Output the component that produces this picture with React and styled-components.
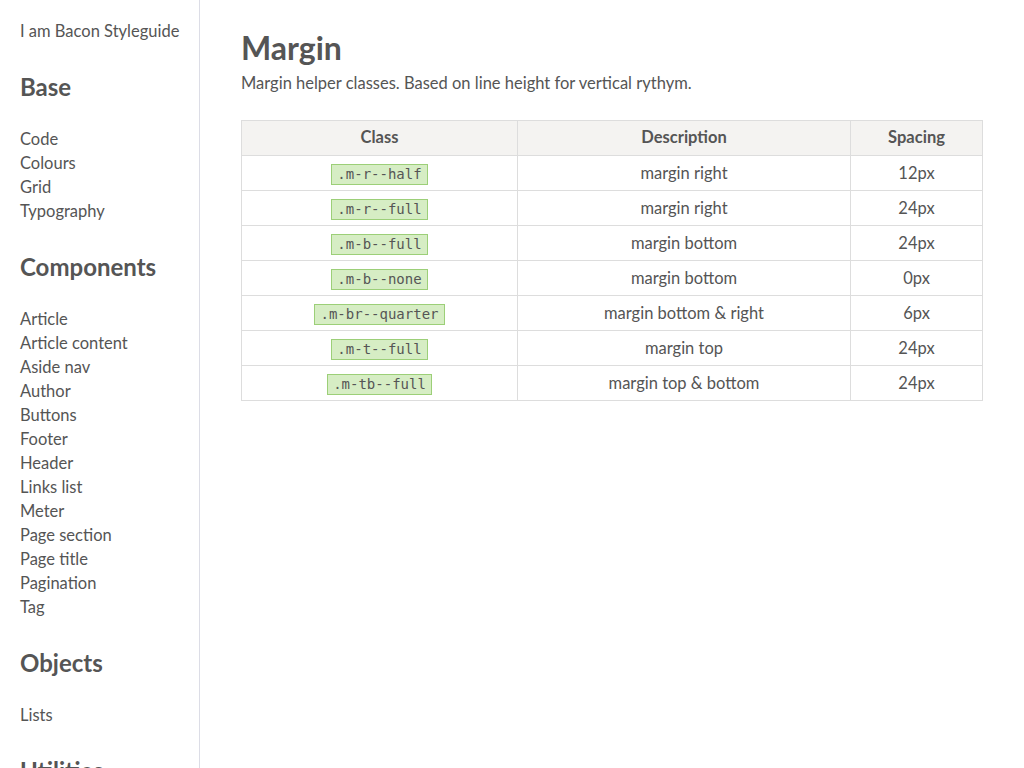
import React from 'react';
import styled, { createGlobalStyle } from 'styled-components';

const GlobalStyle = createGlobalStyle`
  html, body {
    margin: 0;
    padding: 0;
    background: #fff;
    color: #555;
    font-family: "Trebuchet MS", Lato, "DejaVu Sans", sans-serif;
    font-size: 16.5px;
    line-height: 24px;
  }
  * { box-sizing: border-box; }
`;

const nav = [
  { title: 'Base', items: ['Code', 'Colours', 'Grid', 'Typography'] },
  {
    title: 'Components',
    items: [
      'Article', 'Article content', 'Aside nav', 'Author', 'Buttons', 'Footer',
      'Header', 'Links list', 'Meter', 'Page section', 'Page title', 'Pagination', 'Tag',
    ],
  },
  { title: 'Objects', items: ['Lists'] },
  { title: 'Utilities', items: ['Margin', 'Padding'] },
];

const rows = [
  ['.m-r--half', 'margin right', '12px'],
  ['.m-r--full', 'margin right', '24px'],
  ['.m-b--full', 'margin bottom', '24px'],
  ['.m-b--none', 'margin bottom', '0px'],
  ['.m-br--quarter', 'margin bottom & right', '6px'],
  ['.m-t--full', 'margin top', '24px'],
  ['.m-tb--full', 'margin top & bottom', '24px'],
];

const App = () => {
  return (
    <>
      <GlobalStyle />
      <Layout>
        <Sidebar>
          <Brand>I am Bacon Styleguide</Brand>
          {nav.map((section) => (
            <NavSection key={section.title}>
              <NavTitle>{section.title}</NavTitle>
              <NavList>
                {section.items.map((item) => (
                  <li key={item}>{item}</li>
                ))}
              </NavList>
            </NavSection>
          ))}
        </Sidebar>
        <Main>
          <PageTitle>Margin</PageTitle>
          <Intro>Margin helper classes. Based on line height for vertical rythym.</Intro>
          <Table>
            <colgroup>
              <col style={{ width: 276 }} />
              <col style={{ width: 333 }} />
              <col />
            </colgroup>
            <thead>
              <tr>
                <Th>Class</Th>
                <Th>Description</Th>
                <Th>Spacing</Th>
              </tr>
            </thead>
            <tbody>
              {rows.map(([cls, desc, spacing]) => (
                <tr key={cls}>
                  <Td><Code>{cls}</Code></Td>
                  <Td>{desc}</Td>
                  <Td>{spacing}</Td>
                </tr>
              ))}
            </tbody>
          </Table>
        </Main>
      </Layout>
    </>
  );
};

export default App;

const Layout = styled.div`
  display: flex;
  height: 768px;
  overflow: hidden;
`;

const Sidebar = styled.aside`
  width: 200px;
  flex-shrink: 0;
  border-right: 1px solid #dcdde6;
  padding: 19px 20px 0 20px;
`;

const Brand = styled.div`
  line-height: 24px;
  white-space: nowrap;
`;

const NavSection = styled.section`
  margin-top: 26px;
`;

const NavTitle = styled.h2`
  margin: 0;
  font-size: 24px;
  line-height: 36px;
  font-weight: bold;
  color: #555;
`;

const NavList = styled.ul`
  list-style: none;
  margin: 22px 0 0;
  padding: 0;

  li {
    line-height: 24px;
  }
`;

const Main = styled.main`
  flex: 1;
  padding: 28px 41px 0 41px;
`;

const PageTitle = styled.h1`
  margin: 0;
  font-size: 32px;
  line-height: 40px;
  font-weight: bold;
  color: #555;
`;

const Intro = styled.p`
  margin: 3px 0 25px;
  line-height: 24px;
`;

const Table = styled.table`
  width: 100%;
  border-collapse: collapse;
  table-layout: fixed;
  border: 1px solid #ddd;
`;

const Th = styled.th`
  background: #f4f3f1;
  border: 1px solid #ddd;
  height: 35px;
  padding: 0 8px;
  font-weight: bold;
  text-align: center;
  color: #555;
  vertical-align: middle;
  padding-bottom: 2px;
`;

const Td = styled.td`
  border: 1px solid #ddd;
  height: 35px;
  padding: 0 8px 1px;
  text-align: center;
  color: #555;
  vertical-align: middle;
`;

const Code = styled.code`
  display: inline-block;
  font-family: "DejaVu Sans Mono", "Liberation Mono", monospace;
  font-size: 14px;
  line-height: 19px;
  padding: 0 5px;
  background: #d6edc4;
  border: 1px solid #9ccf78;
  color: #555;
`;
